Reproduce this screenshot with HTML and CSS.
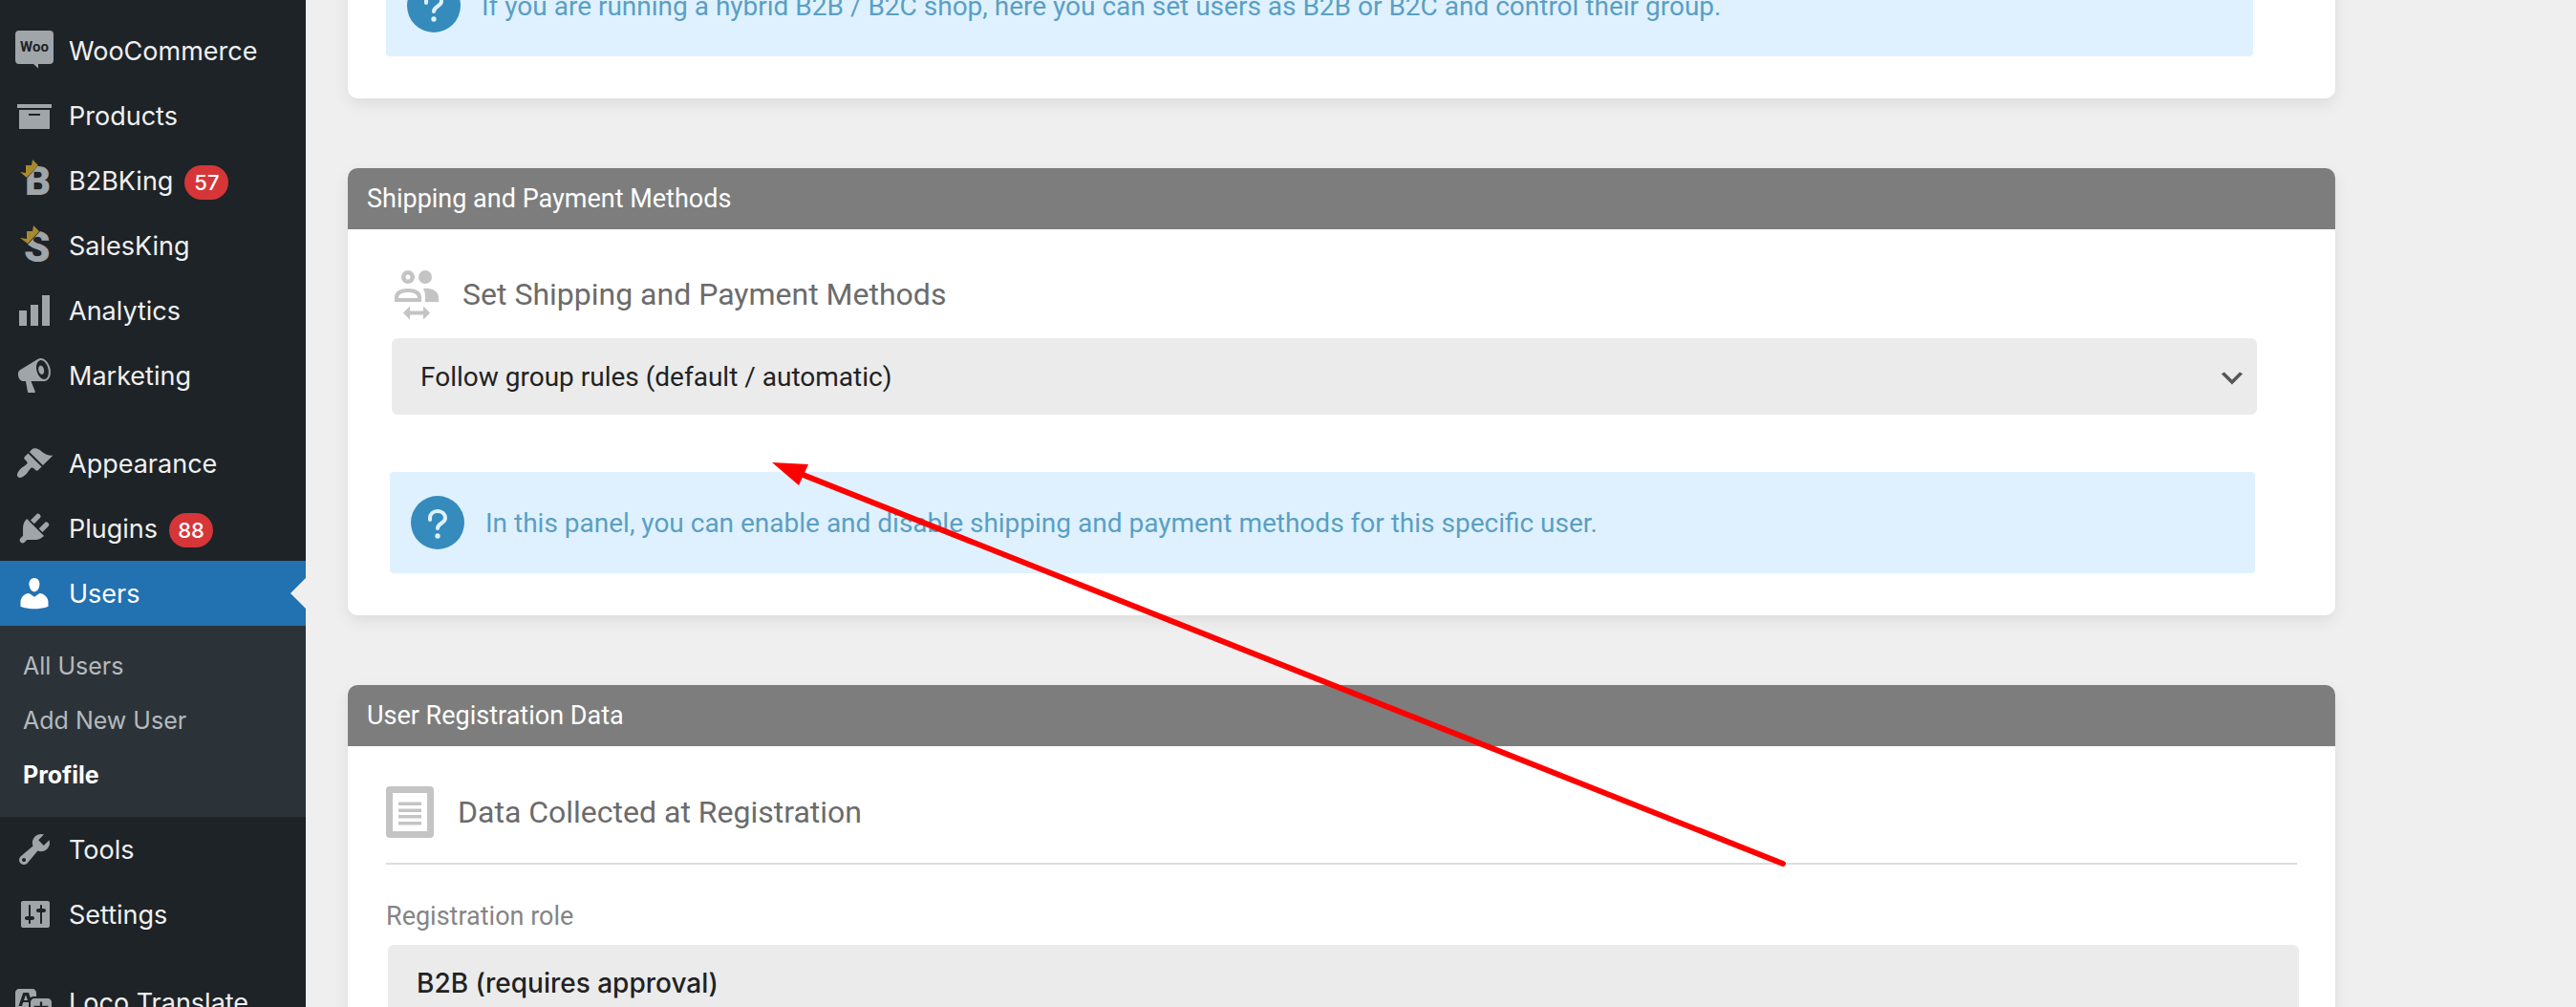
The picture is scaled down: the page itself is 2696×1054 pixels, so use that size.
FILE: index.html
```html
<!DOCTYPE html>
<html lang="en">
<head>
<meta charset="utf-8">
<title>Profile</title>
<link rel="stylesheet" href="styles.css">
</head>
<body>
<div class="layout">
  <nav class="sidebar" aria-label="Main menu">
    <ul class="menu">
      <li><a class="menu-item" href="#">
        <svg class="menu-icon" viewBox="0 0 40 40" aria-hidden="true"><path d="M4 -1h32a4 4 0 0 1 4 4v27a4 4 0 0 1-4 4H24v4.500l-5-4.500H4a4 4 0 0 1-4-4V3a4 4 0 0 1 4-4z"/><text class="woo-mark" x="20" y="21" text-anchor="middle">Woo</text></svg>
        WooCommerce</a></li>
      <li><a class="menu-item" href="#">
        <svg class="menu-icon" viewBox="0 0 20 20" aria-hidden="true"><path d="M19 4v2H1V4h18zM2 7h16v10H2V7zm11 3V9H7v1h6z"/></svg>
        Products</a></li>
      <li><a class="menu-item" href="#">
        <svg class="menu-icon" viewBox="0 0 40 40" aria-hidden="true"><text class="king-mark" x="10" y="35">B</text><path class="king-cut" d="M12 18L25 3l-6-3-16 12z"/><path class="king-crown" d="M5 11l6 1V4h6l1-6 6 6L12 17z"/></svg>
        B2BKing <span class="badge">57</span></a></li>
      <li><a class="menu-item" href="#">
        <svg class="menu-icon" viewBox="0 0 40 40" aria-hidden="true"><text class="king-mark king-mark-tall" x="9" y="37">S</text><path class="king-cut" d="M13 19L26 5l-7-4-16 12z"/><path class="king-crown" d="M5 12l7 1V5h6l1-6 6 6L13 18z"/></svg>
        SalesKing</a></li>
      <li><a class="menu-item" href="#">
        <svg class="menu-icon" viewBox="0 0 20 20" aria-hidden="true"><path d="M18 18V2h-4v16h4zm-6 0V7H8v11h4zm-6 0v-8H2v8h4z"/></svg>
        Analytics</a></li>
      <li><a class="menu-item" href="#">
        <svg class="menu-icon" viewBox="0 0 20 20" aria-hidden="true"><path d="M18.150 5.940c.46 1.620.38 3.220-.02 4.480-.42 1.280-1.260 2.180-2.300 2.480-.16.06-.26.06-.4.06-.06.02-.12.02-.18.02-.06.02-.14.02-.22.02h-6.800l2.220 5.500c.02.14-.06.26-.14.34-.08.1-.24.16-.34.16H6.950c-.1 0-.26-.06-.34-.16-.08-.08-.16-.2-.14-.34l-1-5.500H4.250l-.02-.02c-.5.06-1.080-.18-1.540-.62s-.88-1.080-1.060-1.880c-.24-.8-.2-1.560-.02-2.200.18-.62.58-1.080 1.060-1.300l.02-.02 9-5.400c.1-.06.18-.1.24-.16.06-.04.14-.08.24-.12.16-.08.28-.12.5-.18 1.040-.3 2.240.1 3.220.98s1.840 2.240 2.260 3.860zm-2.580 5.980h-.02c.4-.1.74-.34 1.040-.7.58-.7.86-1.760.86-3.040 0-.64-.1-1.300-.28-1.980-.34-1.360-1.020-2.500-1.780-3.240s-1.680-1.100-2.460-.88c-.82.22-1.400.96-1.700 2-.32 1.040-.28 2.360.06 3.720.38 1.360 1 2.500 1.800 3.240.78.74 1.620 1.100 2.480.88zm-2.540-7.080c.22-.04.42-.02.62.04.38.16.76.48 1.020 1s.42 1.200.42 1.780c0 .3-.04.56-.12.8-.18.48-.44.84-.86.94-.34.1-.8-.06-1.140-.4s-.64-.86-.78-1.500c-.18-.62-.12-1.240.02-1.720s.48-.84.82-.94z"/></svg>
        Marketing</a></li>
    </ul>
    <ul class="menu">
      <li><a class="menu-item" href="#">
        <svg class="menu-icon" viewBox="0 0 20 20" aria-hidden="true"><path d="M14.480 11.060L7.410 3.990l1.500-1.500c.5-.56 2.300-.47 3.510.32 1.210.8 1.430 1.280 2.910 2.100 1.180.64 2.450 1.260 4.450.85zm-.71.71L6.700 4.700 4.930 6.470c-.39.39-.39 1.020 0 1.410l1.060 1.060c.39.39.39 1.030 0 1.420-.6.6-1.430 1.110-2.210 1.690-.35.26-.7.53-1.010.84C1.430 14.230.4 16.080 1.400 17.070c.99 1 2.840-.03 4.180-1.360.31-.31.58-.66.85-1.020.57-.78 1.080-1.610 1.690-2.210.39-.39 1.020-.39 1.410 0l1.060 1.060c.39.39 1.020.39 1.410 0z"/></svg>
        Appearance</a></li>
      <li><a class="menu-item" href="#">
        <svg class="menu-icon" viewBox="0 0 20 20" aria-hidden="true"><path d="M13.110 4.360L9.870 7.600 8 5.730l3.240-3.240c.35-.34 1.050-.2 1.560.32.52.51.66 1.210.31 1.550zm-8 1.770l.91-1.120 9.010 9.010-1.190.84c-.71.71-2.630 1.160-3.820 1.160H6.140L4.900 17.260c-.59.59-1.540.59-2.120 0-.59-.58-.59-1.530 0-2.120l1.240-1.240v-3.880c0-1.130.4-3.190 1.090-3.890zm7.260 3.970l3.240-3.240c.34-.35 1.040-.21 1.550.31.52.51.66 1.210.31 1.550l-3.240 3.250z"/></svg>
        Plugins <span class="badge">88</span></a></li>
      <li><a class="menu-item menu-item-current" href="#">
        <svg class="menu-icon" viewBox="0 0 20 20" aria-hidden="true"><path d="M10 9.250c-2.270 0-2.730-3.440-2.730-3.440C7 4.020 7.820 2 9.970 2c2.160 0 2.980 2.020 2.710 3.810 0 0-.41 3.440-2.680 3.440zm0 2.570L12.720 10c2.390 0 4.520 2.330 4.520 4.530v2.490s-3.650 1.130-7.240 1.130c-3.650 0-7.240-1.130-7.240-1.130v-2.490c0-2.250 1.940-4.480 4.470-4.480z"/></svg>
        Users</a>
        <ul class="submenu">
          <li><a class="submenu-item" href="#">All Users</a></li>
          <li><a class="submenu-item" href="#">Add New User</a></li>
          <li><a class="submenu-item submenu-item-current" href="#">Profile</a></li>
        </ul></li>
      <li><a class="menu-item" href="#">
        <svg class="menu-icon" viewBox="0 0 20 20" aria-hidden="true"><path d="M16.680 9.770c-1.340 1.340-3.300 1.670-4.950.99l-5.410 6.520c-.99.99-2.590.99-3.580 0s-.99-2.590 0-3.570l6.520-5.420c-.68-1.650-.35-3.610.99-4.950 1.280-1.280 3.120-1.620 4.720-1.060l-2.890 2.890 2.820 2.820 2.860-2.870c.53 1.580.18 3.390-1.080 4.650zM3.810 16.210c.4.39 1.040.39 1.430 0 .4-.4.4-1.040 0-1.430-.39-.4-1.030-.4-1.430 0-.39.39-.39 1.030 0 1.430z"/></svg>
        Tools</a></li>
      <li><a class="menu-item" href="#">
        <svg class="menu-icon" viewBox="0 0 20 20" aria-hidden="true"><path d="M18 16V4c0-.55-.45-1-1-1H4c-.55 0-1 .45-1 1v12c0 .55.45 1 1 1h13c.55 0 1-.45 1-1zM8 11h1c.55 0 1 .45 1 1s-.45 1-1 1H8v1.500c0 .28-.22.5-.5.5s-.5-.22-.5-.5V13H6c-.55 0-1-.45-1-1s.45-1 1-1h1V5.500c0-.28.22-.5.5-.5s.5.22.5.5V11zm5-2h-1c-.55 0-1-.45-1-1s.45-1 1-1h1V5.500c0-.28.22-.5.5-.5s.5.22.5.5V7h1c.55 0 1 .45 1 1s-.45 1-1 1h-1v5.500c0 .28-.22.5-.5.5s-.5-.22-.5-.5V9z"/></svg>
        Settings</a></li>
    </ul>
    <ul class="menu">
      <li><a class="menu-item" href="#">
        <svg class="menu-icon" viewBox="0 0 20 20" aria-hidden="true"><path d="M11 7H9.490c-.63 0-1.250.3-1.590.7L7 5H4.130l-2.390 7h1.690l.74-2H7v4H2c-1.100 0-2-.9-2-2V5c0-1.100.9-2 2-2h7c1.100 0 2 .9 2 2v2zM6.510 9H4.490l1-2.930zM10 8h7c1.100 0 2 .9 2 2v7c0 1.100-.9 2-2 2h-7c-1.100 0-2-.9-2-2v-7c0-1.100.9-2 2-2zm7.250 5v-1.080h-3.170V9.750h-1.160v2.170H9.750V13h1.280c.11.85.56 1.850 1.280 2.620-.87.36-1.890.62-2.310.62-.01.02.22.97.2 1.460.84 0 2.210-.5 3.280-1.150 1.090.65 2.480 1.150 3.340 1.150-.02-.49.2-1.440.2-1.460-.43 0-1.490-.27-2.380-.63.7-.77 1.140-1.770 1.250-2.610h1.360zm-3.810 1.930c-.5-.46-.85-1.130-1.010-1.930h2.090c-.17.8-.51 1.470-1 1.930l-.04.03s-.03-.02-.04-.03z"/></svg>
        Loco Translate</a></li>
    </ul>
  </nav>

  <main class="content">
    <section class="card">
      <div class="card-body card-body-users">
        <div class="notice">
          <svg class="notice-icon" viewBox="0 0 56 56" aria-hidden="true"><circle cx="28" cy="28" r="28"/><path d="M20 25v-1.500c0-4.500 3.500-7.500 8-7.500s8 3 8 7.500c0 5-8 5-8 10.500"/><circle class="notice-dot" cx="28" cy="42" r="2.700"/></svg>
          <p>If you are running a hybrid B2B / B2C shop, here you can set users as B2B or B2C and control their group.</p>
        </div>
      </div>
    </section>

    <section class="card">
      <h2 class="card-header">Shipping and Payment Methods</h2>
      <div class="card-body card-body-methods">
        <h3 class="card-title">
          <svg class="title-icon title-icon-users" viewBox="0 0 46 52" aria-hidden="true"><path fill-rule="evenodd" d="M14 1a7 7 0 1 1 0 14a7 7 0 1 1 0-14zm0 4.500a2.500 2.500 0 1 0 0 5a2.500 2.500 0 1 0 0-5z"/><circle cx="32" cy="8" r="7"/><path fill-rule="evenodd" d="M0 34v-5c0-6 6-9 14-9s14 3 14 9v5zm4-4h20c0-4-4-6-10-6s-10 2-10 6z"/><path d="M30 20c9-1 16 3 16 9v5H32v-5c0-4-1-7-2-9z"/><path d="M9 45.500l7-7v5h14v-5l7 7-7 7v-5H16v5z"/></svg>
          <label for="methods">Set Shipping and Payment Methods</label>
        </h3>
        <div class="select-wrap">
          <select class="field" id="methods"><option>Follow group rules (default / automatic)</option></select>
          <svg class="select-arrow" viewBox="0 0 20 20" aria-hidden="true"><path d="M5 6l5 5 5-5 2 1-7 7-7-7 2-1z"/></svg>
        </div>
        <div class="notice">
          <svg class="notice-icon" viewBox="0 0 56 56" aria-hidden="true"><circle cx="28" cy="28" r="28"/><path d="M20 25v-1.500c0-4.500 3.500-7.500 8-7.500s8 3 8 7.500c0 5-8 5-8 10.500"/><circle class="notice-dot" cx="28" cy="42" r="2.700"/></svg>
          <p>In this panel, you can enable and disable shipping and payment methods for this specific user.</p>
        </div>
      </div>
      <svg class="pointer" viewBox="0 0 1062 424" aria-hidden="true"><path class="pointer-line" d="M30 12L1058 420"/><path class="pointer-head" d="M0 0l38 2-10 22z"/></svg>
    </section>

    <section class="card">
      <h2 class="card-header">User Registration Data</h2>
      <div class="card-body card-body-data">
        <h3 class="card-title card-title-ruled">
          <svg class="title-icon title-icon-data" viewBox="0 0 50 54" aria-hidden="true"><path fill-rule="evenodd" d="M4 0h42a4 4 0 0 1 4 4v46a4 4 0 0 1-4 4H4a4 4 0 0 1-4-4V4a4 4 0 0 1 4-4zm3 7v40h36V7zM13 16.500h24v3.500H13zM13 23.500h24V27H13zM13 30h24v3.500H13zM13 37h24v3.500H13z"/></svg>
          Data Collected at Registration
        </h3>
        <label class="field-label" for="role">Registration role</label>
        <input class="field field-text" id="role" type="text" value="B2B (requires approval)">
      </div>
    </section>
  </main>
</div>
</body>
</html>
```
FILE: styles.css
```css
* { box-sizing: border-box; }

body {
  margin: 0;
  height: 100vh;
  overflow: hidden;
  background: #efefef;
  font-family: Roboto, "Liberation Sans", sans-serif;
  font-size: 28px;
  color: #222;
}

h2, h3, p, ul { margin: 0; padding: 0; font-weight: 400; }
ul { list-style: none; }
a { color: inherit; text-decoration: none; }

.layout { display: flex; height: 100%; overflow: hidden; }

/* Sidebar */
.sidebar {
  display: flex;
  flex-direction: column;
  gap: 24px;
  flex: 0 0 320px;
  padding-top: 19px;
  overflow: hidden;
  background: #1d2327;
  color: #f0f0f1;
  font-family: Inter, "Liberation Sans", sans-serif;
  font-size: 27px;
}

.menu-item {
  position: relative;
  display: flex;
  align-items: center;
  height: 68px;
  padding-left: 16px;
  white-space: nowrap;
}
.menu-icon {
  flex: none;
  width: 40px;
  height: 40px;
  margin-right: 16px;
  overflow: visible;
  fill: #a0a5aa;
}
.menu-item-current { background: #2271b1; color: #fff; }
.menu-item-current .menu-icon { fill: #fff; }
.menu-item-current::after {
  content: "";
  position: absolute;
  top: 50%;
  right: 0;
  margin-top: -16px;
  border: 16px solid transparent;
  border-left-width: 0;
  border-right-color: #efefef;
}

.woo-mark { fill: #1d2327; font-size: 15px; font-weight: 700; font-family: Roboto, sans-serif; }
.king-mark { font-size: 42px; font-weight: 900; font-family: Roboto, sans-serif; }
.king-mark-tall { font-size: 44px; }
.king-cut { fill: #1d2327; }
.king-crown { fill: #a88a2c; }

.badge {
  min-width: 46px;
  margin: 4px 0 0 12px;
  padding: 0 9px;
  border-radius: 18px;
  background: #d63638;
  color: #fff;
  font-size: 22px;
  font-weight: 500;
  line-height: 36px;
  text-align: center;
}

.submenu { padding: 14px 0 15px; background: #2c3338; }
.submenu-item {
  display: block;
  padding-left: 24px;
  color: #b4b9be;
  font-size: 25px;
  line-height: 57px;
}
.submenu-item-current { color: #fff; font-weight: 700; }

/* Content, scrolled part of the way down */
.content {
  display: flex;
  flex-direction: column;
  gap: 73px;
  flex: 1;
  min-width: 0;
  margin-top: -87px;
  padding: 0 252px 0 44px;
}
.card {
  position: relative;
  flex: none;
  border-radius: 10px;
  background: #fff;
  box-shadow: 0 6px 16px rgba(0, 0, 0, 0.08);
}
.card-header {
  padding: 0 20px;
  border-radius: 10px 10px 0 0;
  background: #7d7d7d;
  color: #fff;
  font-size: 27px;
  line-height: 64px;
}
.card-body-users { padding: 40px 86px 44px 40px; }
.card-body-methods { padding: 42px 82px 44px 44px; }
.card-body-data { padding: 42px 40px 40px; }

.card-title {
  display: flex;
  align-items: center;
  gap: 25px;
  color: #6b6b6b;
  font-size: 32px;
}
.card-title-ruled { padding-bottom: 26px; border-bottom: 2px solid #ddd; }
.title-icon { flex: none; fill: #c4c4c4; }
.title-icon-users { width: 46px; height: 52px; margin-left: 5px; }
.title-icon-data { width: 50px; height: 54px; }

.notice {
  display: flex;
  align-items: center;
  gap: 22px;
  height: 106px;
  padding: 0 22px;
  border-radius: 4px;
  background: #dff1fe;
  color: #5a9fc4;
}
.notice-icon { flex: none; width: 56px; height: 56px; fill: #358bbc; }
.notice-icon path { fill: none; stroke: #dff1fe; stroke-width: 4; stroke-linecap: round; }
.notice-icon .notice-dot { fill: #dff1fe; }
.card-body-methods .notice { margin: 60px 2px 0 0; }

.field {
  display: block;
  width: 100%;
  height: 80px;
  padding: 0 30px;
  border: 0;
  border-radius: 6px;
  background: #ebebeb;
  color: #222;
  font: inherit;
  appearance: none;
}
.select-wrap { position: relative; margin: 20px 0 0 2px; }
.select-arrow {
  position: absolute;
  top: 26px;
  right: 10px;
  width: 32px;
  height: 32px;
  fill: #555;
  pointer-events: none;
}
.field-label { display: block; margin: 38px 0 14px; color: #858585; font-size: 27px; line-height: 32px; }
.field-text { margin-left: 2px; font-family: Inter, "Liberation Sans", sans-serif; font-weight: 500; }

/* Arrow drawn over the cards, pointing at the methods field */
.pointer {
  position: absolute;
  z-index: 1;
  top: 308px;
  left: 444px;
  width: 1062px;
  height: 424px;
  pointer-events: none;
}
.pointer-line { stroke: #f00; stroke-width: 6; stroke-linecap: round; }
.pointer-head { fill: #f00; }
```
